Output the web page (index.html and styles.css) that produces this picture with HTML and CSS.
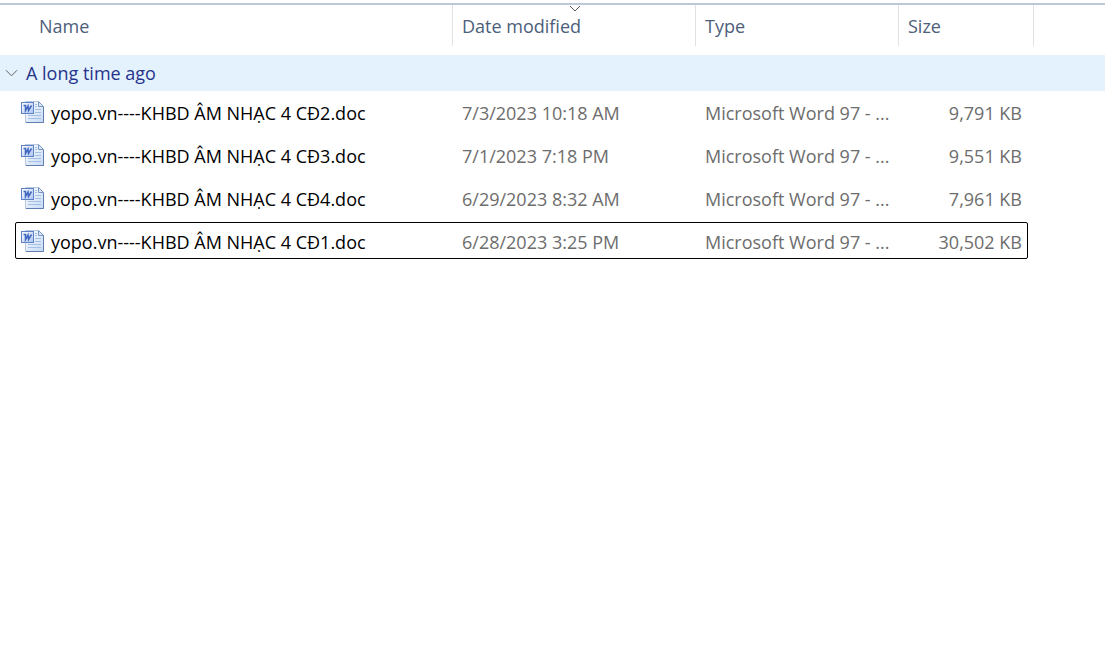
FILE: index.html
```html
<!DOCTYPE html>
<html lang="en">
<head>
<meta charset="utf-8">
<title>Files</title>
<link rel="stylesheet" href="styles.css">
</head>
<body>
<svg class="defs" aria-hidden="true">
  <defs>
    <linearGradient id="page" x1="0" y1="0" x2="1" y2="1">
      <stop offset="0" stop-color="#ffffff"/><stop offset="1" stop-color="#c5d9f5"/>
    </linearGradient>
    <linearGradient id="badge" x1="0" y1="0" x2="1" y2="1">
      <stop offset="0" stop-color="#ffffff"/><stop offset="1" stop-color="#a9c4f0"/>
    </linearGradient>
    <symbol id="doc" viewBox="0 0 24 24">
      <path d="M4.500 1.500H17.500L22.500 6.500V22.500H4.500Z" fill="url(#page)" stroke="#b9c9e2"/>
      <path d="M22.500 6.500V22.500H5" fill="none" stroke="#5f7fb0"/>
      <path d="M17.500 1.500V6.500H22.500Z" fill="#dce8f8" stroke="#7897c4"/>
      <path d="M14 4.500H16M14 6.500H16M14 9.500H20M14 12.500H20M7 15.500H20M7 18.500H20" stroke="#a3bfe2" fill="none"/>
      <rect x="0.500" y="2.500" width="12" height="11" fill="url(#badge)" stroke="#5f82c6"/>
      <path d="M2.500 5.500H4.500L4.500 10.500L7 6L7.500 10.500L10.500 5.500" fill="none" stroke="#3f66bf" stroke-width="1.500"/>
    </symbol>
  </defs>
</svg>
<main class="explorer">
  <table class="files">
    <colgroup><col class="col-name"><col class="col-date"><col class="col-type"><col class="col-size"><col class="col-rest"></colgroup>
    <thead>
      <tr>
        <th scope="col"><button class="head head-name" type="button">Name</button></th>
        <th scope="col" aria-sort="descending"><button class="head" type="button">Date modified<svg class="sort" viewBox="0 0 12 7" aria-hidden="true"><path d="M1 1L6 6L11 1"/></svg></button></th>
        <th scope="col"><button class="head" type="button">Type</button></th>
        <th scope="col"><button class="head" type="button">Size</button></th>
        <td></td>
      </tr>
    </thead>
    <tbody>
      <tr class="group-row">
        <th colspan="5" scope="rowgroup"><button class="group" type="button" aria-expanded="true"><svg class="chevron" viewBox="0 0 14 8" aria-hidden="true"><path d="M1 1L7 7L13 1"/></svg>A long time ago</button></th>
      </tr>
      <tr class="row">
        <td><div class="name"><svg class="icon" aria-hidden="true"><use href="#doc"/></svg>yopo.vn----KHBD ÂM NHẠC 4 CĐ2.doc</div></td>
        <td>7/3/2023 10:18 AM</td><td>Microsoft Word 97 - ...</td><td class="size">9,791 KB</td><td></td>
      </tr>
      <tr class="row">
        <td><div class="name"><svg class="icon" aria-hidden="true"><use href="#doc"/></svg>yopo.vn----KHBD ÂM NHẠC 4 CĐ3.doc</div></td>
        <td>7/1/2023 7:18 PM</td><td>Microsoft Word 97 - ...</td><td class="size">9,551 KB</td><td></td>
      </tr>
      <tr class="row">
        <td><div class="name"><svg class="icon" aria-hidden="true"><use href="#doc"/></svg>yopo.vn----KHBD ÂM NHẠC 4 CĐ4.doc</div></td>
        <td>6/29/2023 8:32 AM</td><td>Microsoft Word 97 - ...</td><td class="size">7,961 KB</td><td></td>
      </tr>
      <tr class="row focused">
        <td><div class="name"><svg class="icon" aria-hidden="true"><use href="#doc"/></svg>yopo.vn----KHBD ÂM NHẠC 4 CĐ1.doc</div></td>
        <td>6/28/2023 3:25 PM</td><td>Microsoft Word 97 - ...</td><td class="size">30,502 KB</td><td></td>
      </tr>
    </tbody>
  </table>
</main>
</body>
</html>
```

FILE: styles.css
```css
*, *::after { box-sizing: border-box; }
body {
  margin: 0;
  background: #fff;
  color: #6d6d6d;
  font: 18px/24px "Segoe UI", "Open Sans", "Noto Sans", sans-serif;
}
.defs { position: absolute; width: 0; height: 0; }
.explorer { padding-top: 3px; }
.files {
  width: 100%;
  table-layout: fixed;
  border-collapse: separate;
  border-spacing: 0;
  border-top: 2px solid #b9c9d8;
}
.col-name { width: 453px; }
.col-date { width: 243px; }
.col-type { width: 203px; }
.col-size { width: 135px; }
th, td { padding: 0; text-align: left; font-weight: 400; white-space: nowrap; }
thead th { padding-bottom: 9px; }
button { border: 0; background: none; font: inherit; text-align: left; }
.head {
  position: relative;
  display: block;
  width: 100%;
  height: 41px;
  padding: 0 9px;
  border-right: 1px solid #e2e2e2;
  color: #4c607a;
}
.head-name { padding-left: 39px; }
.sort {
  position: absolute;
  top: 0;
  left: 50%;
  width: 12px;
  height: 7px;
  margin-left: -5px;
}
.sort path, .chevron path { fill: none; stroke: #555; }
.group-row { background: #e4f2fe; }
.group {
  display: flex;
  align-items: center;
  gap: 8px;
  width: 100%;
  height: 36px;
  padding: 0 5px;
  color: #26348b;
}
.chevron { width: 13px; height: 8px; }
.row { position: relative; }
.row td { height: 43px; padding: 0 9px; }
.row td:first-child { padding: 0 0 0 21px; }
.row .size { padding-right: 12px; text-align: right; }
.name { display: flex; align-items: center; gap: 6px; color: #000; }
.icon { width: 24px; height: 24px; margin-bottom: 2px; }
.focused td:first-child::after {
  content: "";
  position: absolute;
  top: 2px;
  left: 15px;
  width: 1013px;
  height: 37px;
  border: 1px solid #000;
  border-radius: 2px;
  pointer-events: none;
}
```
